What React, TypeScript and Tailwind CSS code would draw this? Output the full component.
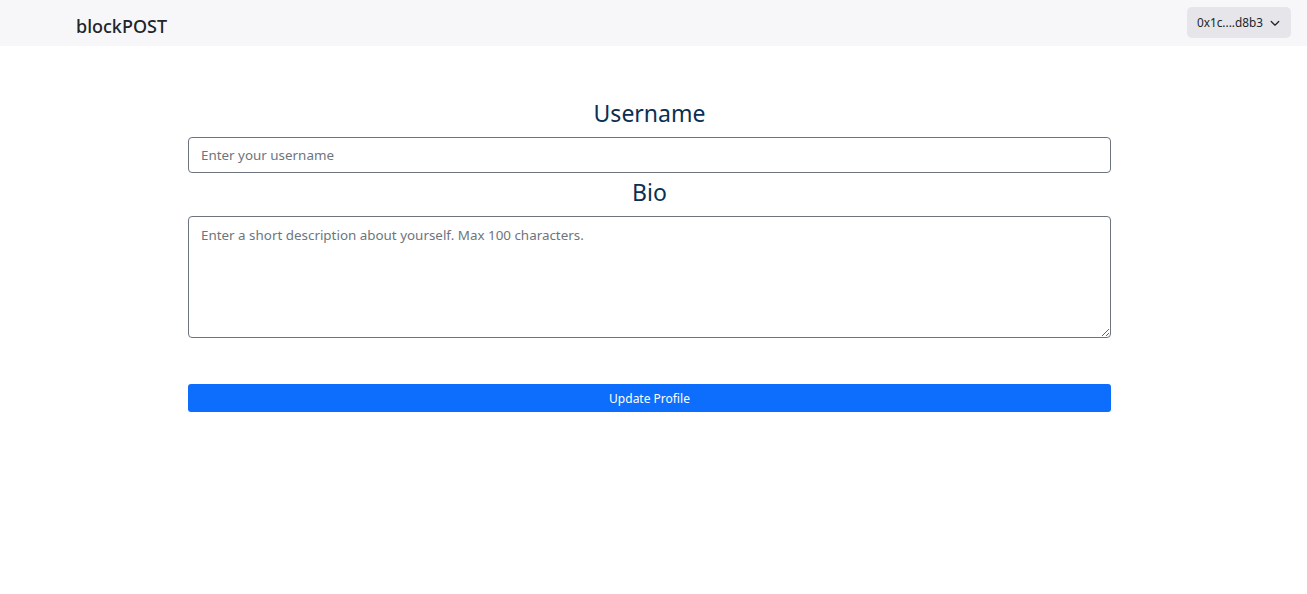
import React from "react";

export default function App() {
  return (
    <div className="min-h-screen bg-white" style={{ fontFamily: '"Noto Sans", "Open Sans", sans-serif' }}>
      <header className="h-[46px] bg-[#f7f7f9] flex items-center justify-between pl-[76px] pr-[16px]">
        <span className="text-[18px] font-medium text-[#212529] mt-[6px]">blockPOST</span>
        <button className="h-[31px] mt-[-1px] pl-[10px] pr-[11px] rounded-[5px] bg-[#e6e6ea] flex items-center gap-[7px] text-[11.8px] text-[#212529]">
          <span>0x1c....d8b3</span>
          <svg width="10" height="10" viewBox="0 0 16 16" fill="none" stroke="#212529" strokeWidth="2" strokeLinecap="round" strokeLinejoin="round">
            <path d="M2 5.5l6 6 6-6" />
          </svg>
        </button>
      </header>
      <main className="w-[923px] ml-[188px] pt-[51px] flex flex-col">
        <h2 className="text-center text-[23px] leading-[32px] text-[#0a2f52] mb-[8px]">Username</h2>
        <input
          className="w-full h-[36px] border border-[#6c757d] rounded-[4px] px-[12px] text-[13.4px] text-[#212529] placeholder:text-[#6c757d] outline-none"
          placeholder="Enter your username"
        />
        <h2 className="text-center text-[23px] leading-[32px] text-[#0a2f52] mt-[3px] mb-[8px]">Bio</h2>
        <textarea
          className="w-full h-[122px] border border-[#6c757d] rounded-[4px] px-[12px] py-[8px] text-[13.4px] text-[#212529] placeholder:text-[#6c757d] outline-none resize-y"
          placeholder="Enter a short description about yourself. Max 100 characters."
        />
        <button className="mt-[46px] w-full h-[28px] pt-[1px] bg-[#0d6efd] rounded-[3px] text-white text-[12px]">
          Update Profile
        </button>
      </main>
    </div>
  );
}
